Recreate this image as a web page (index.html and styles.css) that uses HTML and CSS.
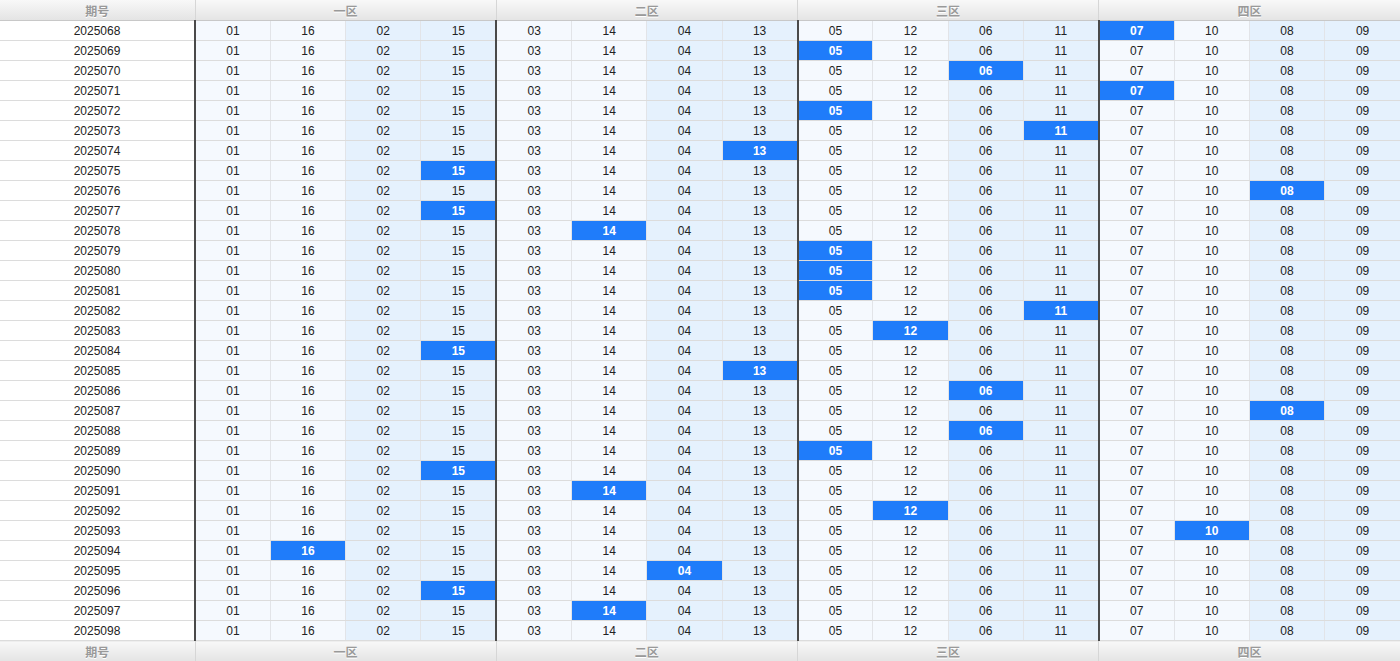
FILE: index.html
```html
<!DOCTYPE html>
<html>
<head>
<meta charset="utf-8">
<link rel="stylesheet" href="styles.css">
</head>
<body>
<table class="grid">
<colgroup><col class="c-period"></colgroup>
<thead>
<tr><th>期号</th><th colspan="4">一区</th><th colspan="4">二区</th><th colspan="4">三区</th><th colspan="4">四区</th></tr>
</thead>
<tbody>
<tr><td>2025068</td><td>01</td><td>16</td><td>02</td><td>15</td><td>03</td><td>14</td><td>04</td><td>13</td><td>05</td><td>12</td><td>06</td><td>11</td><td class="h">07</td><td>10</td><td>08</td><td>09</td></tr>
<tr><td>2025069</td><td>01</td><td>16</td><td>02</td><td>15</td><td>03</td><td>14</td><td>04</td><td>13</td><td class="h">05</td><td>12</td><td>06</td><td>11</td><td>07</td><td>10</td><td>08</td><td>09</td></tr>
<tr><td>2025070</td><td>01</td><td>16</td><td>02</td><td>15</td><td>03</td><td>14</td><td>04</td><td>13</td><td>05</td><td>12</td><td class="h">06</td><td>11</td><td>07</td><td>10</td><td>08</td><td>09</td></tr>
<tr><td>2025071</td><td>01</td><td>16</td><td>02</td><td>15</td><td>03</td><td>14</td><td>04</td><td>13</td><td>05</td><td>12</td><td>06</td><td>11</td><td class="h">07</td><td>10</td><td>08</td><td>09</td></tr>
<tr><td>2025072</td><td>01</td><td>16</td><td>02</td><td>15</td><td>03</td><td>14</td><td>04</td><td>13</td><td class="h">05</td><td>12</td><td>06</td><td>11</td><td>07</td><td>10</td><td>08</td><td>09</td></tr>
<tr><td>2025073</td><td>01</td><td>16</td><td>02</td><td>15</td><td>03</td><td>14</td><td>04</td><td>13</td><td>05</td><td>12</td><td>06</td><td class="h">11</td><td>07</td><td>10</td><td>08</td><td>09</td></tr>
<tr><td>2025074</td><td>01</td><td>16</td><td>02</td><td>15</td><td>03</td><td>14</td><td>04</td><td class="h">13</td><td>05</td><td>12</td><td>06</td><td>11</td><td>07</td><td>10</td><td>08</td><td>09</td></tr>
<tr><td>2025075</td><td>01</td><td>16</td><td>02</td><td class="h">15</td><td>03</td><td>14</td><td>04</td><td>13</td><td>05</td><td>12</td><td>06</td><td>11</td><td>07</td><td>10</td><td>08</td><td>09</td></tr>
<tr><td>2025076</td><td>01</td><td>16</td><td>02</td><td>15</td><td>03</td><td>14</td><td>04</td><td>13</td><td>05</td><td>12</td><td>06</td><td>11</td><td>07</td><td>10</td><td class="h">08</td><td>09</td></tr>
<tr><td>2025077</td><td>01</td><td>16</td><td>02</td><td class="h">15</td><td>03</td><td>14</td><td>04</td><td>13</td><td>05</td><td>12</td><td>06</td><td>11</td><td>07</td><td>10</td><td>08</td><td>09</td></tr>
<tr><td>2025078</td><td>01</td><td>16</td><td>02</td><td>15</td><td>03</td><td class="h">14</td><td>04</td><td>13</td><td>05</td><td>12</td><td>06</td><td>11</td><td>07</td><td>10</td><td>08</td><td>09</td></tr>
<tr><td>2025079</td><td>01</td><td>16</td><td>02</td><td>15</td><td>03</td><td>14</td><td>04</td><td>13</td><td class="h">05</td><td>12</td><td>06</td><td>11</td><td>07</td><td>10</td><td>08</td><td>09</td></tr>
<tr><td>2025080</td><td>01</td><td>16</td><td>02</td><td>15</td><td>03</td><td>14</td><td>04</td><td>13</td><td class="h">05</td><td>12</td><td>06</td><td>11</td><td>07</td><td>10</td><td>08</td><td>09</td></tr>
<tr><td>2025081</td><td>01</td><td>16</td><td>02</td><td>15</td><td>03</td><td>14</td><td>04</td><td>13</td><td class="h">05</td><td>12</td><td>06</td><td>11</td><td>07</td><td>10</td><td>08</td><td>09</td></tr>
<tr><td>2025082</td><td>01</td><td>16</td><td>02</td><td>15</td><td>03</td><td>14</td><td>04</td><td>13</td><td>05</td><td>12</td><td>06</td><td class="h">11</td><td>07</td><td>10</td><td>08</td><td>09</td></tr>
<tr><td>2025083</td><td>01</td><td>16</td><td>02</td><td>15</td><td>03</td><td>14</td><td>04</td><td>13</td><td>05</td><td class="h">12</td><td>06</td><td>11</td><td>07</td><td>10</td><td>08</td><td>09</td></tr>
<tr><td>2025084</td><td>01</td><td>16</td><td>02</td><td class="h">15</td><td>03</td><td>14</td><td>04</td><td>13</td><td>05</td><td>12</td><td>06</td><td>11</td><td>07</td><td>10</td><td>08</td><td>09</td></tr>
<tr><td>2025085</td><td>01</td><td>16</td><td>02</td><td>15</td><td>03</td><td>14</td><td>04</td><td class="h">13</td><td>05</td><td>12</td><td>06</td><td>11</td><td>07</td><td>10</td><td>08</td><td>09</td></tr>
<tr><td>2025086</td><td>01</td><td>16</td><td>02</td><td>15</td><td>03</td><td>14</td><td>04</td><td>13</td><td>05</td><td>12</td><td class="h">06</td><td>11</td><td>07</td><td>10</td><td>08</td><td>09</td></tr>
<tr><td>2025087</td><td>01</td><td>16</td><td>02</td><td>15</td><td>03</td><td>14</td><td>04</td><td>13</td><td>05</td><td>12</td><td>06</td><td>11</td><td>07</td><td>10</td><td class="h">08</td><td>09</td></tr>
<tr><td>2025088</td><td>01</td><td>16</td><td>02</td><td>15</td><td>03</td><td>14</td><td>04</td><td>13</td><td>05</td><td>12</td><td class="h">06</td><td>11</td><td>07</td><td>10</td><td>08</td><td>09</td></tr>
<tr><td>2025089</td><td>01</td><td>16</td><td>02</td><td>15</td><td>03</td><td>14</td><td>04</td><td>13</td><td class="h">05</td><td>12</td><td>06</td><td>11</td><td>07</td><td>10</td><td>08</td><td>09</td></tr>
<tr><td>2025090</td><td>01</td><td>16</td><td>02</td><td class="h">15</td><td>03</td><td>14</td><td>04</td><td>13</td><td>05</td><td>12</td><td>06</td><td>11</td><td>07</td><td>10</td><td>08</td><td>09</td></tr>
<tr><td>2025091</td><td>01</td><td>16</td><td>02</td><td>15</td><td>03</td><td class="h">14</td><td>04</td><td>13</td><td>05</td><td>12</td><td>06</td><td>11</td><td>07</td><td>10</td><td>08</td><td>09</td></tr>
<tr><td>2025092</td><td>01</td><td>16</td><td>02</td><td>15</td><td>03</td><td>14</td><td>04</td><td>13</td><td>05</td><td class="h">12</td><td>06</td><td>11</td><td>07</td><td>10</td><td>08</td><td>09</td></tr>
<tr><td>2025093</td><td>01</td><td>16</td><td>02</td><td>15</td><td>03</td><td>14</td><td>04</td><td>13</td><td>05</td><td>12</td><td>06</td><td>11</td><td>07</td><td class="h">10</td><td>08</td><td>09</td></tr>
<tr><td>2025094</td><td>01</td><td class="h">16</td><td>02</td><td>15</td><td>03</td><td>14</td><td>04</td><td>13</td><td>05</td><td>12</td><td>06</td><td>11</td><td>07</td><td>10</td><td>08</td><td>09</td></tr>
<tr><td>2025095</td><td>01</td><td>16</td><td>02</td><td>15</td><td>03</td><td>14</td><td class="h">04</td><td>13</td><td>05</td><td>12</td><td>06</td><td>11</td><td>07</td><td>10</td><td>08</td><td>09</td></tr>
<tr><td>2025096</td><td>01</td><td>16</td><td>02</td><td class="h">15</td><td>03</td><td>14</td><td>04</td><td>13</td><td>05</td><td>12</td><td>06</td><td>11</td><td>07</td><td>10</td><td>08</td><td>09</td></tr>
<tr><td>2025097</td><td>01</td><td>16</td><td>02</td><td>15</td><td>03</td><td class="h">14</td><td>04</td><td>13</td><td>05</td><td>12</td><td>06</td><td>11</td><td>07</td><td>10</td><td>08</td><td>09</td></tr>
<tr><td>2025098</td><td>01</td><td>16</td><td>02</td><td>15</td><td>03</td><td>14</td><td>04</td><td>13</td><td>05</td><td>12</td><td>06</td><td>11</td><td>07</td><td>10</td><td>08</td><td>09</td></tr>
</tbody>
<tfoot>
<tr><th>期号</th><th colspan="4">一区</th><th colspan="4">二区</th><th colspan="4">三区</th><th colspan="4">四区</th></tr>
</tfoot>
</table>
</body>
</html>
```

FILE: styles.css
```css
html, body {
  margin: 0;
  padding: 0;
  background: #ffffff;
}

.grid {
  width: 1400px;
  table-layout: fixed;
  border-collapse: collapse;
  font-family: "Liberation Sans", Arial, "Noto Sans CJK SC", sans-serif;
  font-size: 12px;
  color: #222;
}

.c-period {
  width: 195px;
}

.grid th {
  height: 20px;
  padding: 0;
  font-weight: bold;
  color: #999;
  text-shadow: 0 1px 0 #fff;
  background: linear-gradient(#f8f8f8, #e4e4e4);
  border-left: 1px solid #d6d6d6;
  text-align: center;
  vertical-align: middle;
}

.grid th:first-child {
  border-left: none;
}

.grid thead th {
  border-bottom: 1px solid #c8c8c8;
}

.grid tfoot th {
  border-top: 1px solid #d6d6d6;
  height: 20px;
}

.grid td {
  height: 19px;
  padding: 0;
  text-align: center;
  vertical-align: middle;
  border-bottom: 1px solid #dcdcdc;
  border-left: 1px solid #e2e4e8;
  white-space: nowrap;
}

.grid td:first-child {
  background: #ffffff;
  border-left: none;
}

.grid td:nth-child(4n+2),
.grid td:nth-child(4n+3) {
  background: #f5f9fe;
}

.grid td:nth-child(4n),
.grid td:nth-child(4n+5) {
  background: #e5f1fd;
}

.grid td:nth-child(4n+2) {
  border-left: 2px solid #4a4a4a;
}

.grid td.h {
  background: #1f7cfa;
  color: #fff;
  font-weight: bold;
}
```
